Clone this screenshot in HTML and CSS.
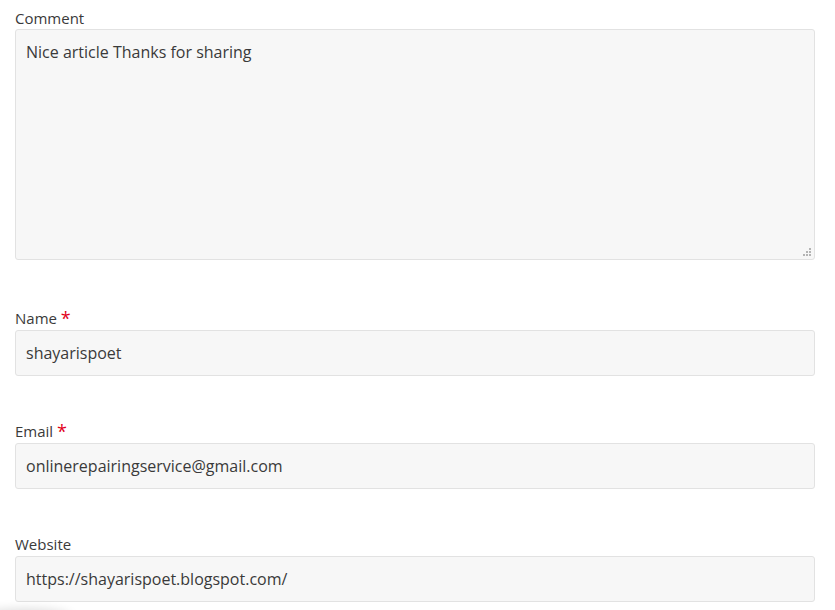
FILE: index.html
```html
<!DOCTYPE html>
<html lang="en">
<head>
<meta charset="utf-8">
<title>Comment form</title>
<link rel="stylesheet" href="styles.css">
</head>
<body>
<form class="comment-form">
  <div class="field field-comment">
    <label class="label" for="comment">Comment</label>
    <div class="textarea-wrap">
      <textarea id="comment" class="control textarea">Nice article Thanks for sharing</textarea>
      <svg class="resize-grip" width="9" height="9" viewBox="0 0 9 9" aria-hidden="true">
        <rect x="6" y="0" width="2" height="2" fill="#b4b4b4"/>
        <rect x="3" y="3" width="2" height="2" fill="#b4b4b4"/>
        <rect x="6" y="3" width="2" height="2" fill="#b4b4b4"/>
        <rect x="0" y="6" width="2" height="2" fill="#b4b4b4"/>
        <rect x="3" y="6" width="2" height="2" fill="#b4b4b4"/>
        <rect x="6" y="6" width="2" height="2" fill="#b4b4b4"/>
      </svg>
    </div>
  </div>
  <div class="field">
    <label class="label label-input" for="author">Name <span class="required">*</span></label>
    <input id="author" class="control input" type="text" value="shayarispoet">
  </div>
  <div class="field">
    <label class="label label-input" for="email">Email <span class="required">*</span></label>
    <input id="email" class="control input" type="text" value="onlinerepairingservice@gmail.com">
  </div>
  <div class="field">
    <label class="label label-input" for="url">Website</label>
    <input id="url" class="control input" type="text" value="https://shayarispoet.blogspot.com/">
  </div>
</form>
<div class="corner-shadow"></div>
</body>
</html>
```

FILE: styles.css
```css
html, body {
  margin: 0;
  padding: 0;
  background: #ffffff;
}

body {
  font-family: "Open Sans", "Noto Sans", sans-serif;
  color: #3a3a3a;
  overflow: hidden;
  height: 610px;
  position: relative;
}

.comment-form {
  display: flex;
  flex-direction: column;
  padding: 8px 20px 0 15px;
  gap: 46px;
}

.field {
  display: flex;
  flex-direction: column;
}

.field-comment {
  margin-bottom: 3px;
}

.label {
  box-sizing: border-box;
  font-size: 15px;
  line-height: 21px;
  height: 21px;
  color: #3a3a3a;
}

.label-input {
  line-height: 19px;
  padding-bottom: 2px;
}

.required {
  color: #e2001a;
  font-size: 18px;
  line-height: 15px;
  position: relative;
  top: 1px;
}

.control {
  box-sizing: border-box;
  width: 800px;
  margin: 0;
  border: 1px solid #e2e2e2;
  border-radius: 3px;
  background: #f7f7f7;
  font-family: "Open Sans", "Noto Sans", sans-serif;
  font-size: 16px;
  color: #3a3a3a;
  outline: none;
}

.textarea-wrap {
  position: relative;
  width: 800px;
}

.textarea {
  display: block;
  height: 231px;
  padding: 10px 10px;
  line-height: 24px;
  resize: none;
}

.resize-grip {
  position: absolute;
  right: 3px;
  bottom: 3px;
}

.input {
  height: 46px;
  padding: 0 10px;
  line-height: 24px;
}

.corner-shadow {
  position: absolute;
  left: -20px;
  bottom: -14px;
  width: 90px;
  height: 14px;
  border-radius: 50%;
  box-shadow: 0 0 10px 2px rgba(0, 0, 0, 0.12);
}
```
